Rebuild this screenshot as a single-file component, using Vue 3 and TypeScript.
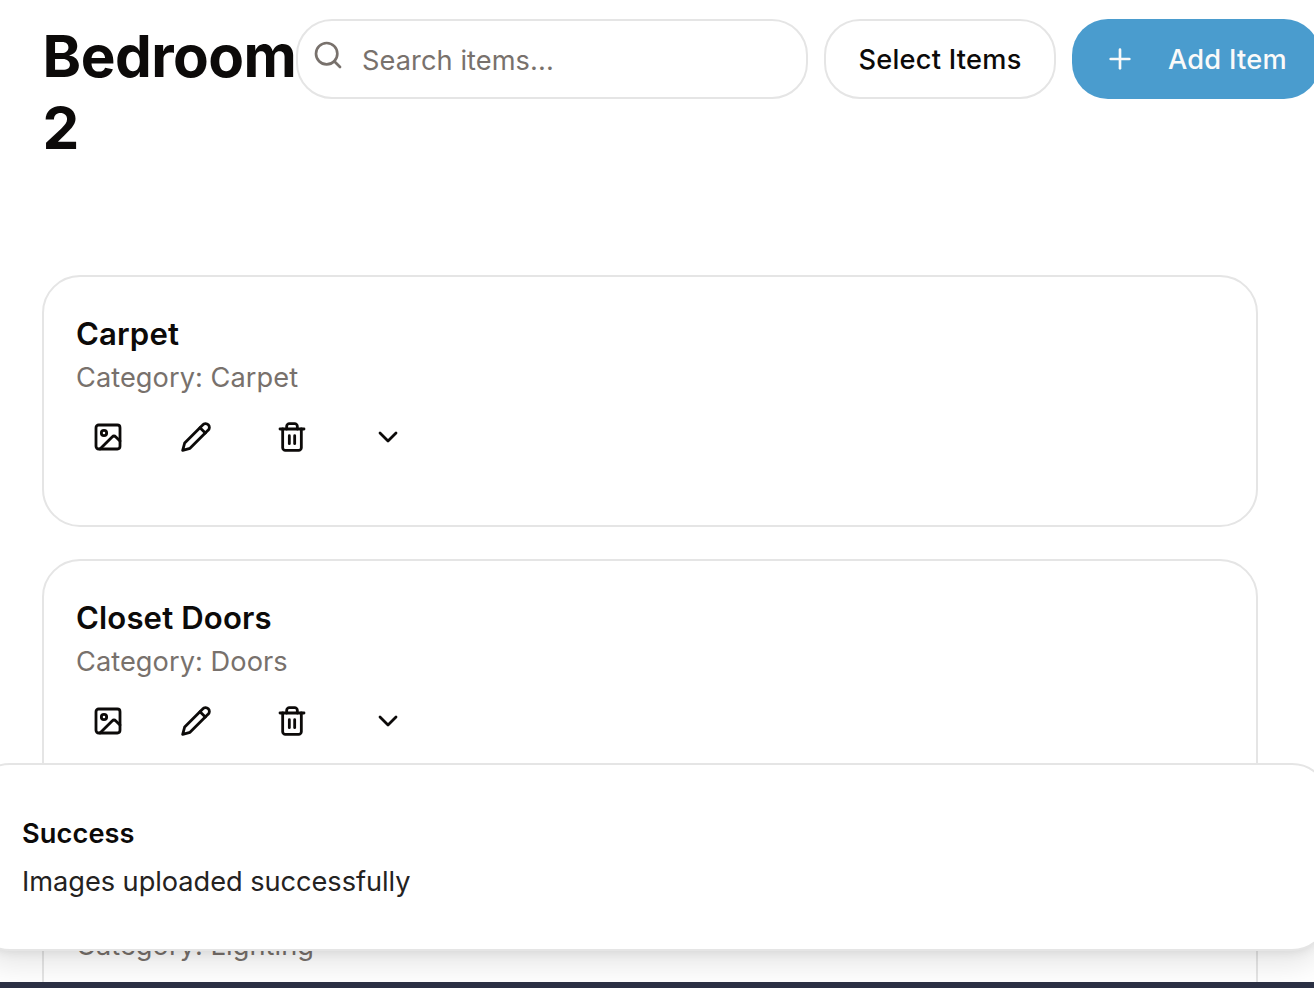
<script setup lang="ts">
interface RoomItem {
  id: number
  name?: string
  category: string
}

const items: RoomItem[] = [
  { id: 1, name: 'Carpet', category: 'Carpet' },
  { id: 2, name: 'Closet Doors', category: 'Doors' },
  { id: 3, category: 'Lighting' },
]
</script>

<template>
  <div class="page">
    <header class="toolbar">
      <h1 class="title">Bedroom 2</h1>
      <div class="actions">
        <label class="search">
          <svg class="icon search-icon" viewBox="0 0 24 24"><circle cx="11" cy="11" r="8" /><path d="m21 21-4.3-4.3" /></svg>
          <input class="search-input" type="text" placeholder="Search items..." />
        </label>
        <button class="btn outline">Select Items</button>
        <button class="btn primary">
          <svg class="icon" viewBox="0 0 24 24"><path d="M5 12h14" /><path d="M12 5v14" /></svg>
          <span>Add Item</span>
        </button>
      </div>
    </header>

    <main class="list">
      <article v-for="item in items" :key="item.id" class="card">
        <h3 class="name">{{ item.name }}</h3>
        <p class="category">Category: {{ item.category }}</p>
        <div class="tools">
          <button class="tool small" aria-label="Images">
            <svg class="icon" viewBox="0 0 24 24"><rect width="18" height="18" x="3" y="3" rx="2" /><circle cx="9" cy="9" r="2" /><path d="m21 15-3.086-3.086a2 2 0 0 0-2.828 0L6 21" /></svg>
          </button>
          <button class="tool" aria-label="Edit">
            <svg class="icon" viewBox="0 0 24 24"><path d="M17 3a2.85 2.83 0 1 1 4 4L7.5 20.5 2 22l1.5-5.5Z" /><path d="m15 5 4 4" /></svg>
          </button>
          <button class="tool" aria-label="Delete">
            <svg class="icon" viewBox="0 0 24 24"><path d="M3 6h18" /><path d="M19 6v14c0 1-1 2-2 2H7c-1 0-2-1-2-2V6" /><path d="M8 6V4c0-1 1-2 2-2h4c1 0 2 1 2 2v2" /><path d="M10 11v6" /><path d="M14 11v6" /></svg>
          </button>
          <button class="tool" aria-label="Expand">
            <svg class="icon" viewBox="0 0 24 24"><path d="m6 9 6 6 6-6" /></svg>
          </button>
        </div>
      </article>
    </main>

    <div class="toast" role="status">
      <div class="toast-title">Success</div>
      <div class="toast-text">Images uploaded successfully</div>
    </div>
    <div class="bottom-edge"></div>
  </div>
</template>

<style>
html,
body {
  margin: 0;
  overflow: hidden;
  background: #fff;
}
</style>

<style scoped>
* {
  box-sizing: border-box;
}
.page {
  position: relative;
  width: 1314px;
  height: 988px;
  overflow: hidden;
  background: #fff;
  color: #0c0a09;
  font-family: Inter, "Liberation Sans", sans-serif;
  font-size: 27.2px;
  line-height: 40px;
}
.toolbar {
  display: flex;
  align-items: flex-start;
  height: 275px;
  padding: 19px 0 0 42px;
}
.title {
  flex: none;
  width: 254px;
  margin: 1px 0 0;
  padding-left: 0.6px;
  font-size: 58.4px;
  line-height: 72px;
  font-weight: 700;
  letter-spacing: -0.55px;
}
.actions {
  display: flex;
  flex: none;
  gap: 16px;
}
.search {
  display: flex;
  width: 512px;
  height: 80px;
  padding: 0 16px;
  border: 2px solid #e5e5e5;
  border-radius: 36px;
}
.icon {
  display: block;
  flex: none;
  width: 32px;
  height: 32px;
  fill: none;
  stroke: currentColor;
  stroke-width: 2;
  stroke-linecap: round;
  stroke-linejoin: round;
}
.search-icon {
  margin: 18px 0 0 -2px;
  color: #78716c;
}
.search-input {
  flex: 1;
  min-width: 0;
  margin: 4px 0 0 18px;
  padding: 0;
  border: 0;
  outline: 0;
  background: transparent;
  font: inherit;
  letter-spacing: 0.08px;
}
.search-input::placeholder {
  color: #78716c;
  opacity: 1;
}
.btn {
  display: flex;
  flex: none;
  align-items: center;
  height: 80px;
  padding: 0;
  border-radius: 36px;
  font: inherit;
  font-weight: 500;
  letter-spacing: 0.25px;
  white-space: nowrap;
}
.outline {
  justify-content: center;
  width: 232px;
  padding-top: 2px;
  border: 2px solid #e5e5e5;
  background: #fff;
  color: #0c0a09;
}
.primary {
  gap: 32px;
  width: 248px;
  padding-left: 32px;
  border: 0;
  background: #4a9cce;
  color: #fafaf9;
}
.primary span {
  padding-top: 2px;
}
.list {
  display: flex;
  flex-direction: column;
  gap: 32px;
  padding: 0 56px 0 42px;
}
.card {
  flex: none;
  height: 252px;
  padding: 37px 32px 0;
  border: 2px solid #e5e5e5;
  border-radius: 38px;
}
.name {
  height: 40px;
  margin: 0;
  font-size: 31.1px;
  line-height: 40px;
  font-weight: 600;
  letter-spacing: 0.14px;
}
.category {
  margin: 4px 0 0;
  color: #78716c;
  letter-spacing: 0.06px;
}
.tools {
  display: flex;
  margin-top: 7px;
}
.tool {
  display: flex;
  align-items: center;
  justify-content: center;
  width: 96px;
  height: 64px;
  padding: 0;
  border: 0;
  background: transparent;
  color: #0c0a09;
}
.tool .icon {
  stroke-width: 2.1;
}
.small {
  width: 64px;
  margin-right: 8px;
}
.toast {
  position: absolute;
  top: 763px;
  left: -28px;
  width: 1358px;
  height: 188px;
  padding: 49px 48px 0;
  border: 2px solid #e5e5e5;
  border-radius: 38px;
  background: #fff;
  box-shadow: 0 20px 30px -6px rgba(0, 0, 0, 0.1), 0 8px 12px -8px rgba(0, 0, 0, 0.1);
}
.toast-title {
  font-weight: 600;
  letter-spacing: 0.1px;
}
.toast-text {
  margin-top: 8px;
  color: #242221;
  letter-spacing: -0.04px;
}
.bottom-edge {
  position: absolute;
  bottom: 0;
  left: 0;
  width: 100%;
  height: 6px;
  background: #2b3044;
}
</style>
